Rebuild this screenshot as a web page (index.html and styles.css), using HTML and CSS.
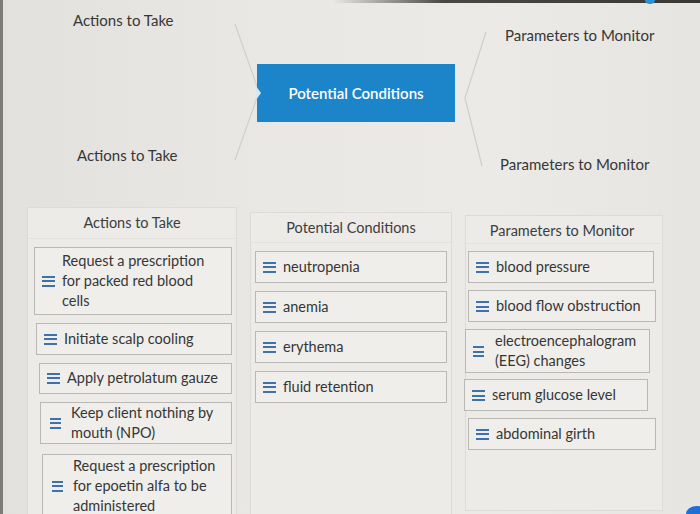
FILE: index.html
```html
<!DOCTYPE html>
<html>
<head>
<meta charset="utf-8">
<link rel="stylesheet" href="styles.css">
</head>
<body>
<div class="screen">
  <div class="topbar"><span class="dot"></span></div>
  <section class="diagram">
    <div class="labels left">
      <div class="lbl l1">Actions to Take</div>
      <div class="lbl l2">Actions to Take</div>
    </div>
    <svg class="chev chev-left" width="30" height="150" viewBox="0 0 30 150"><polyline points="2,2 26,70 2,138" fill="none" stroke="#cfcfcc" stroke-width="1.2"/></svg>
    <div class="center-box"><span class="notch"></span>Potential Conditions</div>
    <svg class="chev chev-right" width="30" height="150" viewBox="0 0 30 150"><polyline points="24,6 3,72 20,140" fill="none" stroke="#cfcfcc" stroke-width="1.2"/></svg>
    <div class="labels right">
      <div class="lbl r1">Parameters to Monitor</div>
      <div class="lbl r2">Parameters to Monitor</div>
    </div>
  </section>
  <section class="columns">
    <div class="panel p1">
      <div class="head">Actions to Take</div>
      <div class="item i-a1"><span class="grip"></span><span class="txt">Request a prescription for packed red blood cells</span></div>
      <div class="item i-a2"><span class="grip"></span><span class="txt">Initiate scalp cooling</span></div>
      <div class="item i-a3"><span class="grip"></span><span class="txt">Apply petrolatum gauze</span></div>
      <div class="item i-a4"><span class="grip"></span><span class="txt">Keep client nothing by mouth (NPO)</span></div>
      <div class="item i-a5"><span class="grip"></span><span class="txt">Request a prescription for epoetin alfa to be administered</span></div>
    </div>
    <div class="panel p2">
      <div class="head">Potential Conditions</div>
      <div class="item"><span class="grip"></span><span class="txt">neutropenia</span></div>
      <div class="item"><span class="grip"></span><span class="txt">anemia</span></div>
      <div class="item"><span class="grip"></span><span class="txt">erythema</span></div>
      <div class="item"><span class="grip"></span><span class="txt">fluid retention</span></div>
    </div>
    <div class="panel p3">
      <div class="head">Parameters to Monitor</div>
      <div class="item"><span class="grip"></span><span class="txt">blood pressure</span></div>
      <div class="item"><span class="grip"></span><span class="txt">blood flow obstruction</span></div>
      <div class="item i-eeg"><span class="grip"></span><span class="txt">electroencephalogram (EEG) changes</span></div>
      <div class="item"><span class="grip"></span><span class="txt">serum glucose level</span></div>
      <div class="item"><span class="grip"></span><span class="txt">abdominal girth</span></div>
    </div>
  </section>
  <span class="corner-dot"></span>
</div>
</body>
</html>
```
FILE: styles.css
```css
html, body {
  margin: 0;
  padding: 0;
}
body {
  width: 700px;
  height: 514px;
  overflow: hidden;
  background: #e5e4e0;
  font-family: Lato, "Open Sans", sans-serif;
  color: #363636;
}
.screen {
  position: relative;
  width: 700px;
  height: 514px;
  overflow: hidden;
  border-left: 3px solid #7d7b78;
  box-sizing: border-box;
  background: linear-gradient(90deg, #e2e1dd 0%, #e9e8e4 40%, #ebeae6 70%, #e6e5e1 100%);
}
.topbar {
  position: absolute;
  top: 0;
  left: 330px;
  right: 0;
  height: 3px;
  background: linear-gradient(90deg, rgba(40,40,40,0) 0%, #4a4846 30%, #3a3836 100%);
}
.dot {
  position: absolute;
  left: 312px;
  top: -3px;
  width: 10px;
  height: 7px;
  border-radius: 50%;
  background: #2d8fd0;
}
.corner-dot {
  position: absolute;
  right: -8px;
  bottom: -8px;
  width: 22px;
  height: 16px;
  border-radius: 50%;
  background: #1f6fd6;
}
.diagram {
  display: flex;
  height: 205px;
  font-size: 15px;
}
.labels {
  display: flex;
  flex-direction: column;
}
.labels.left {
  width: 230px;
}
.lbl {
  white-space: nowrap;
  line-height: 18px;
}
.l1 { margin: 11px 0 0 70px; }
.l2 { margin: 117px 0 0 74px; }
.chev { flex: none; margin-top: 22px; }
.center-box {
  position: relative;
  flex: none;
  width: 198px;
  height: 58px;
  margin-top: 64px;
  margin-left: -6px;
  background: #1c84c9;
  color: #ffffff;
  font-weight: 600;
  display: flex;
  align-items: center;
  justify-content: center;
  font-size: 15px;
}
.notch {
  position: absolute;
  left: -1px;
  top: 22px;
  width: 0;
  height: 0;
  border-top: 7px solid transparent;
  border-bottom: 7px solid transparent;
  border-left: 5px solid #d8e6ef;
}
.chev-right { margin-top: 26px; margin-left: 7px; }
.labels.right .r1 { margin: 26px 0 0 13px; }
.labels.right .r2 { margin: 111px 0 0 8px; }

.columns {
  display: flex;
  align-items: flex-start;
  padding-left: 24px;
  font-size: 14.5px;
}
.panel {
  display: flex;
  flex-direction: column;
  gap: 7px;
  background: #ecebe8;
  border: 1px solid #dcdbd7;
  padding: 0 4px 8px;
  box-sizing: border-box;
}
.p1 { width: 210px; margin-top: 2px; height: 340px; gap: 8px; }
.p2 { width: 202px; margin-left: 13px; margin-top: 7px; padding-bottom: 120px; gap: 8px; }
.p3 { width: 198px; margin-left: 13px; margin-top: 10px; padding: 0 6px 60px 2px; }
.head {
  text-align: center;
  line-height: 18px;
  padding: 6px 0 6px;
  margin: 0 -4px;
  border-bottom: 1px solid #e2e1dd;
  color: #3d3d3d;
}
.p2 .head { padding-bottom: 5px; }
.p3 .head { padding-bottom: 3px; }
.item {
  display: flex;
  align-items: center;
  gap: 7px;
  background: #efeeeb;
  border: 1px solid #b9b8b4;
  padding: 5px 8px 5px 7px;
  line-height: 20px;
  min-height: 20px;
}
.grip {
  flex: none;
  width: 13px;
  height: 11px;
  background: linear-gradient(#3f72a8 0 2px, transparent 2px 4.5px, #3f72a8 4.5px 6.5px, transparent 6.5px 9px, #3f72a8 9px 11px);
}
.txt { flex: 1; }
.i-a1 { padding-top: 3px; padding-bottom: 3px; margin-left: 2px; }
.i-a2 { margin-left: 4px; padding-top: 5px; padding-bottom: 5px; }
.i-a3 { margin-left: 7px; padding-top: 4px; padding-bottom: 5px; }
.i-a4 { margin-left: 8px; padding-top: 0; padding-bottom: 0; }
.i-a5 { margin-left: 10px; padding-top: 1px; padding-bottom: 2px; margin-top: 2px; }
.i-a4 .grip, .i-a5 .grip { width: 11px; margin-left: 2px; margin-right: 3px; }
.i-eeg .grip { width: 11px; margin-right: 4px; }
.i-eeg { padding-top: 1px; padding-bottom: 1px; }
.p3 .item:nth-child(2) { margin-right: 2px; }
.p3 .item:nth-child(4) { margin-right: 6px; margin-left: -3px; }
.p3 .item:nth-child(5) { margin-right: 8px; margin-left: -4px; margin-top: -1px; }
.p3 .i-eeg { margin-right: 4px; margin-left: -2px; }
```
